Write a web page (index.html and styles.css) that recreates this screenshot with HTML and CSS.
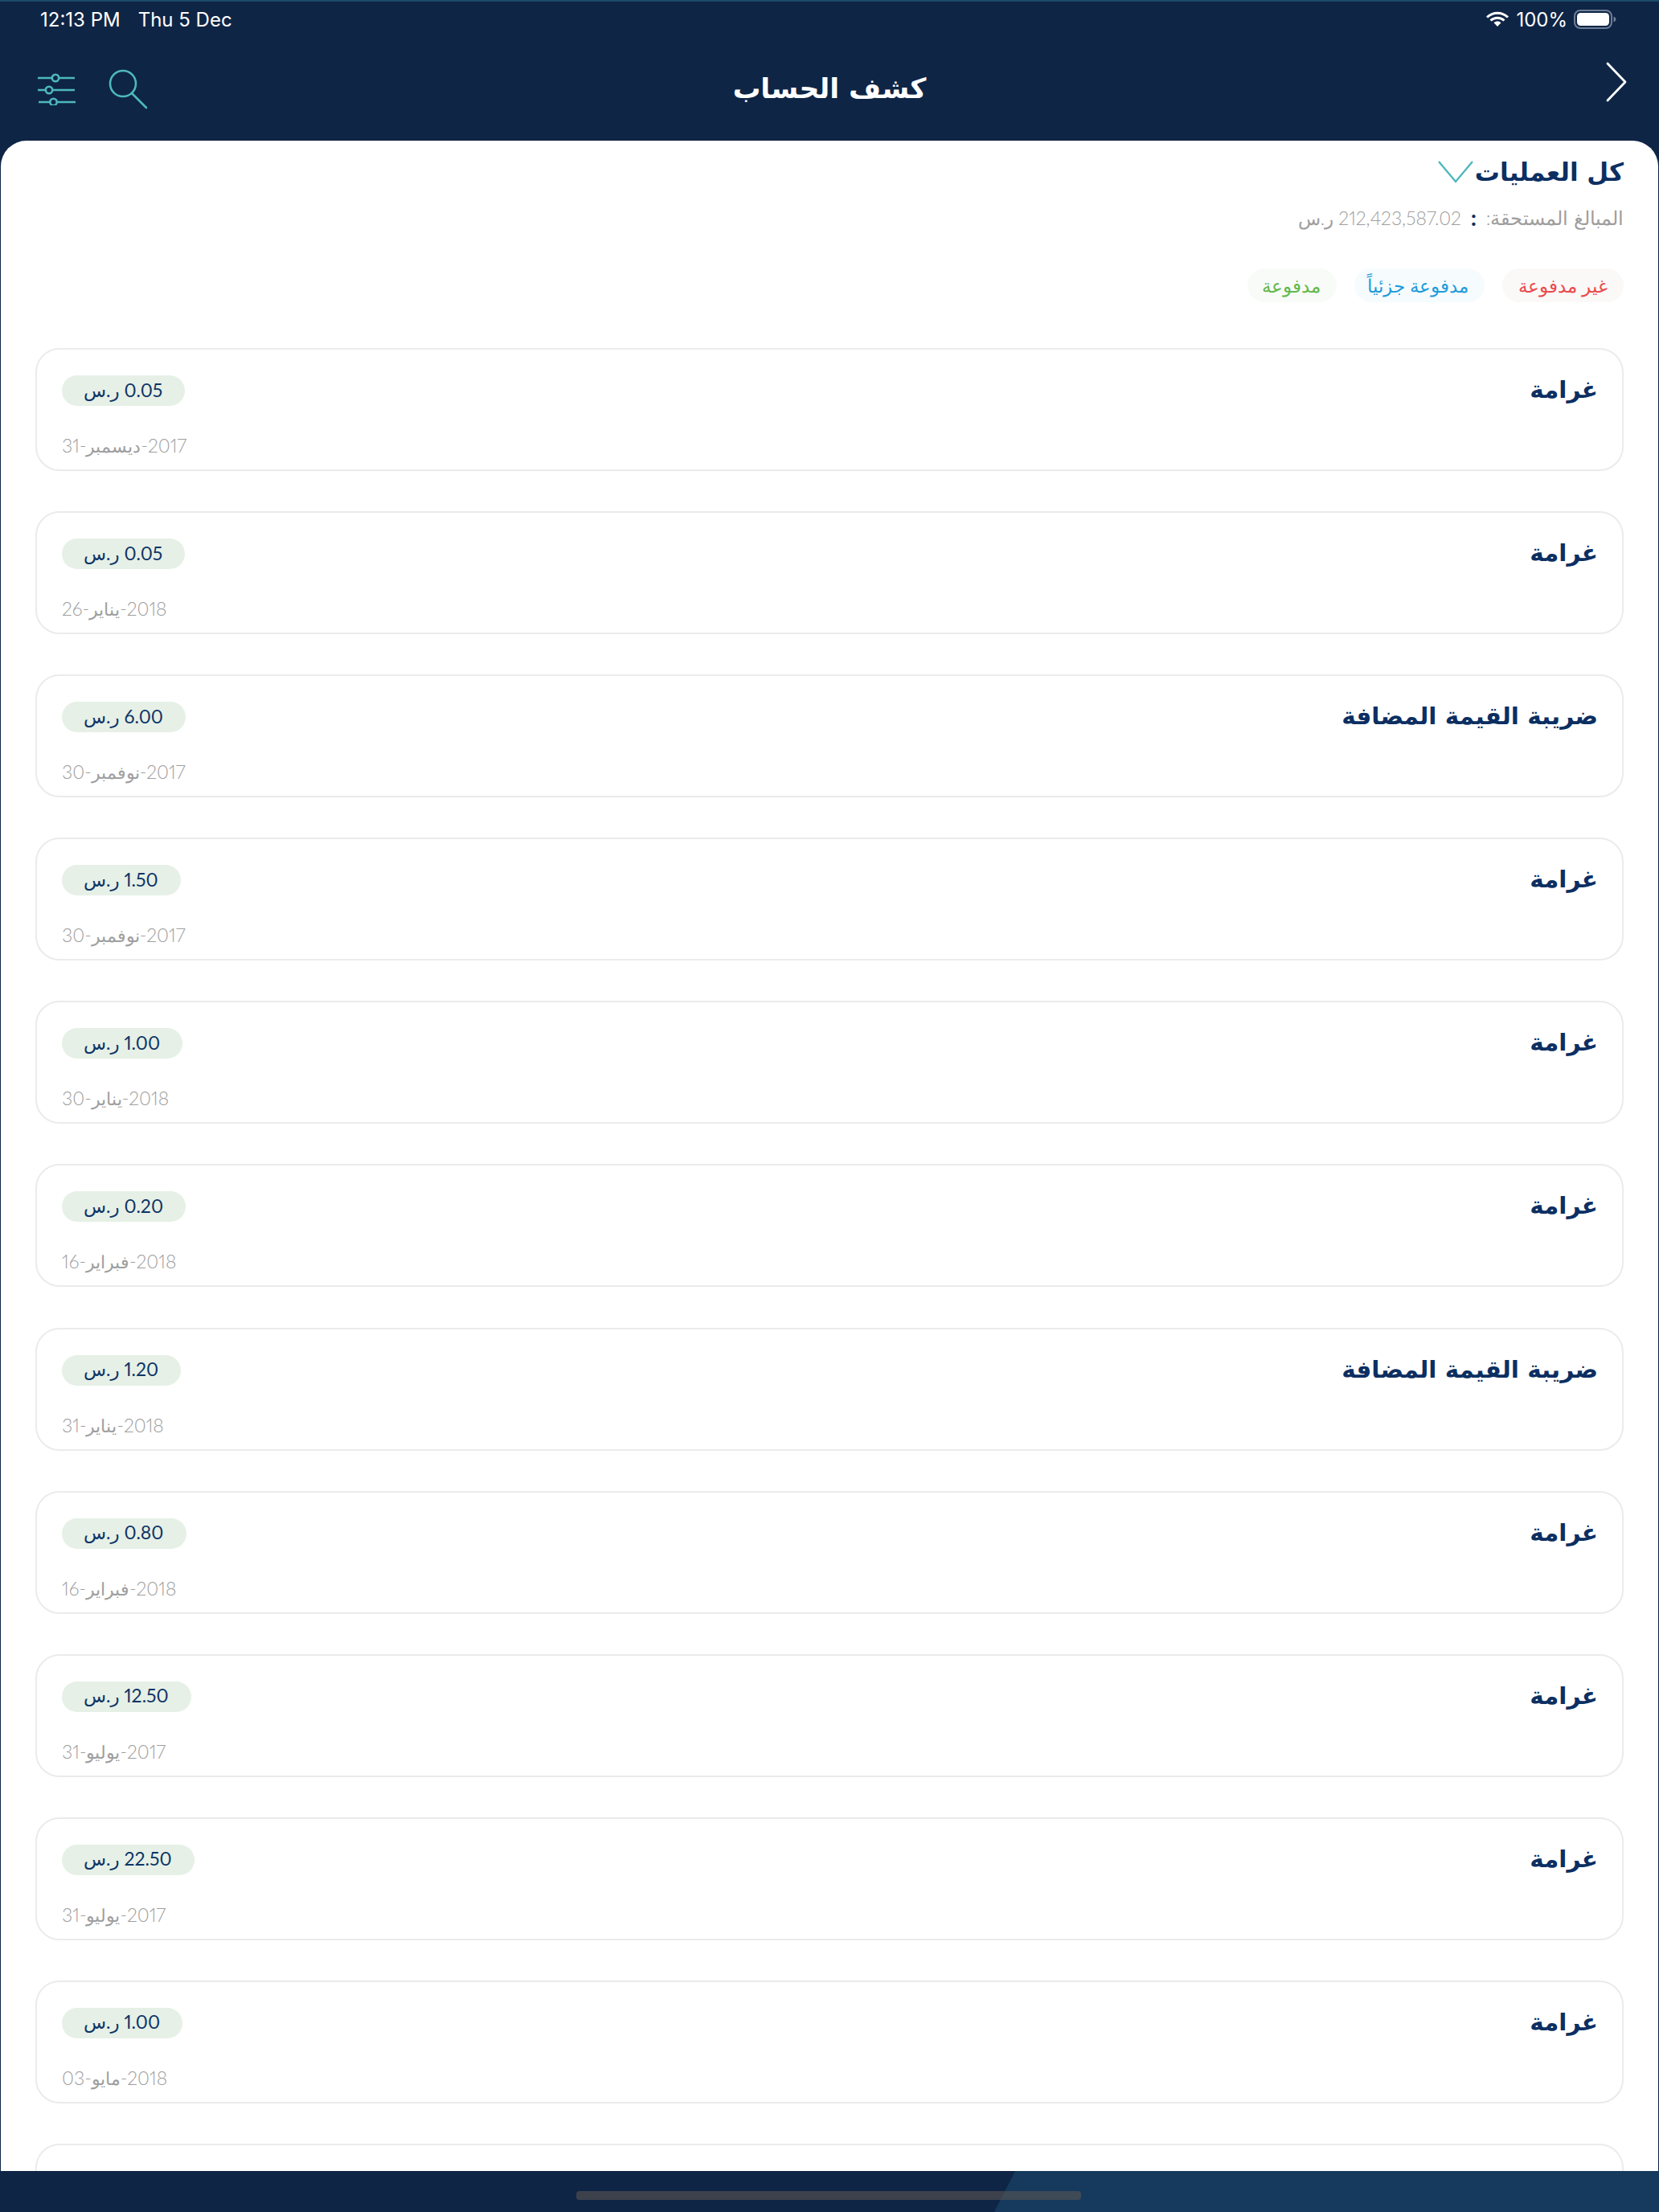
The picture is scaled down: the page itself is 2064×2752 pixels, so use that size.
FILE: index.html
```html
<!DOCTYPE html>
<html lang="ar">
<head>
<meta charset="utf-8">
<title>كشف الحساب</title>
<link rel="stylesheet" href="styles.css">
</head>
<body>
<header class="top">
  <div class="status">
    <div class="status-left"><span>12:13 PM</span><span>Thu 5 Dec</span></div>
    <div class="status-right">
      <svg class="wifi" width="30" height="20" viewBox="0 0 30 20"><path d="M2 7.5C9.5 .5 20.5 .5 28 7.5M6.5 11.5C11.5 7 18.5 7 23.5 11.5" fill="none" stroke="#fff" stroke-width="3"/><path d="M10.5 14.2C13.2 11.9 16.8 11.9 19.5 14.2L15 19Z" fill="#fff"/></svg>
      <span>100%</span>
      <svg class="battery" width="54" height="24" viewBox="0 0 54 24"><rect x="1" y="1" width="46" height="22" rx="7" fill="none" stroke="#6e7d96" stroke-width="2"/><rect x="4" y="4" width="40" height="16" rx="4.5" fill="#fff"/><path d="M49.500 8.500C51.500 9.300 52.500 10.500 52.500 12C52.500 13.500 51.500 14.700 49.500 15.500Z" fill="#6e7d96"/></svg>
    </div>
  </div>
  <div class="nav">
    <div class="nav-icons">
      <svg width="50" height="40" viewBox="0 0 50 40" fill="none" stroke="#4db8bd" stroke-width="2.6"><path d="M1 6H19M27 6H47M1 21H11M19 21H47M2 36H16M25 36H48"/><circle cx="23" cy="6" r="4.2"/><circle cx="15" cy="21" r="4.2"/><circle cx="20.500" cy="36" r="4.200"/></svg>
      <svg width="50" height="50" viewBox="0 0 50 50" fill="none" stroke="#4db8bd" stroke-width="2.6"><circle cx="18" cy="18" r="16"/><path d="M29 30L47 48" stroke-linecap="round"/></svg>
    </div>
    <h1 class="nav-title">كشف الحساب</h1>
    <svg class="nav-back" width="28" height="50" viewBox="0 0 28 50" fill="none" stroke="#fff" stroke-width="2.8" stroke-linecap="round" stroke-linejoin="round"><path d="M3 2L25 25L3 48"/></svg>
  </div>
</header>

<main class="sheet" dir="rtl">
  <div class="summary">
    <div class="summary-title"><span>كل العمليات</span><svg width="44" height="30" viewBox="0 0 44 30" fill="none" stroke="#4db8bd" stroke-width="2.4"><path d="M1 2L22 27L43 2"/></svg></div>
    <div class="summary-due"><span class="due-label">المبالغ المستحقة:</span><b class="colon">:</b><span>212,423,587.02 ر.س</span></div>
    <div class="filters">
      <span class="filter filter-red">غير مدفوعة</span>
      <span class="filter filter-blue">مدفوعة جزئياً</span>
      <span class="filter filter-green">مدفوعة</span>
    </div>
  </div>
  <div class="list">
    <article class="card"><div class="card-row"><h2 class="card-title">غرامة</h2><span class="amount">0.05 ر.س</span></div><div class="date" dir="ltr">31-<bdi>ديسمبر</bdi>-2017</div></article>
    <article class="card"><div class="card-row"><h2 class="card-title">غرامة</h2><span class="amount">0.05 ر.س</span></div><div class="date" dir="ltr">26-<bdi>يناير</bdi>-2018</div></article>
    <article class="card"><div class="card-row"><h2 class="card-title">ضريبة القيمة المضافة</h2><span class="amount">6.00 ر.س</span></div><div class="date" dir="ltr">30-<bdi>نوفمبر</bdi>-2017</div></article>
    <article class="card"><div class="card-row"><h2 class="card-title">غرامة</h2><span class="amount">1.50 ر.س</span></div><div class="date" dir="ltr">30-<bdi>نوفمبر</bdi>-2017</div></article>
    <article class="card"><div class="card-row"><h2 class="card-title">غرامة</h2><span class="amount">1.00 ر.س</span></div><div class="date" dir="ltr">30-<bdi>يناير</bdi>-2018</div></article>
    <article class="card"><div class="card-row"><h2 class="card-title">غرامة</h2><span class="amount">0.20 ر.س</span></div><div class="date" dir="ltr">16-<bdi>فبراير</bdi>-2018</div></article>
    <article class="card"><div class="card-row"><h2 class="card-title">ضريبة القيمة المضافة</h2><span class="amount">1.20 ر.س</span></div><div class="date" dir="ltr">31-<bdi>يناير</bdi>-2018</div></article>
    <article class="card"><div class="card-row"><h2 class="card-title">غرامة</h2><span class="amount">0.80 ر.س</span></div><div class="date" dir="ltr">16-<bdi>فبراير</bdi>-2018</div></article>
    <article class="card"><div class="card-row"><h2 class="card-title">غرامة</h2><span class="amount">12.50 ر.س</span></div><div class="date" dir="ltr">31-<bdi>يوليو</bdi>-2017</div></article>
    <article class="card"><div class="card-row"><h2 class="card-title">غرامة</h2><span class="amount">22.50 ر.س</span></div><div class="date" dir="ltr">31-<bdi>يوليو</bdi>-2017</div></article>
    <article class="card"><div class="card-row"><h2 class="card-title">غرامة</h2><span class="amount">1.00 ر.س</span></div><div class="date" dir="ltr">03-<bdi>مايو</bdi>-2018</div></article>
    <article class="card"></article>
  </div>
</main>

<footer class="bottom"><div class="bottom-shade"></div><div class="home-bar"></div></footer>
</body>
</html>
```

FILE: styles.css
```css
* { box-sizing: border-box; }
html, body { margin: 0; height: 2752px; }
body {
  display: flex;
  flex-direction: column;
  overflow: hidden;
  background: #0f2546;
  font-family: "Lato", "DejaVu Sans", sans-serif;
  font-variant-numeric: proportional-nums;
}
.top { height: 175px; flex: none; border-top: 2px solid #1b4a68; color: #fff; }
.status {
  display: flex;
  justify-content: space-between;
  align-items: center;
  height: 44px;
  padding: 0 52px 0 50px;
  font: 400 24px "Inter", "Liberation Sans", sans-serif;
}
.status-left { display: flex; gap: 22px; }
.status-right { display: flex; align-items: center; gap: 8px; }
.status-right svg { display: block; }
.nav {
  position: relative;
  display: flex;
  align-items: center;
  justify-content: space-between;
  height: 129px;
  padding: 0 39px 0 46px;
}
.nav-icons { display: flex; align-items: center; gap: 39px; }
.nav-icons svg { display: block; }
.nav-back { margin-bottom: 18px; }
.nav-title {
  position: absolute;
  left: 0;
  right: 0;
  top: 36px;
  margin: 0;
  text-align: center;
  font: 700 34.5px/56px "DejaVu Sans", sans-serif;
}
.sheet {
  flex: 1;
  min-height: 0;
  overflow: hidden;
  margin: 0 1px;
  padding: 0 43px;
  background: #fff;
  border-radius: 32px 32px 0 0;
}
.summary { padding-top: 15px; height: 258px; }
.summary-title {
  display: flex;
  align-items: center;
  gap: 2px;
  color: #0c2f62;
  font: 700 31px/48px "DejaVu Sans", sans-serif;
}
.summary-due {
  display: flex;
  align-items: center;
  gap: 12px;
  margin-top: 15px;
  color: #9e9e9e;
  font-size: 23px;
  font-weight: 300;
  line-height: 36px;
}
.due-label { font-size: 24px; }
.colon { color: #0c2f62; font-size: 26px; font-weight: 900; }
.filters { display: flex; gap: 22px; margin-top: 45px; }
.filter {
  display: flex;
  align-items: center;
  height: 42px;
  padding: 0 20px;
  border-radius: 21px;
  font-size: 23px;
  font-weight: 300;
}
.filter-red { color: #e94b4b; background: #fbf8f8; }
.filter-blue { padding-inline-end: 16px; color: #1e9bdc; background: #f6fbfe; }
.filter-green { padding-inline-end: 18px; color: #62b84a; background: #f8fbf8; }
.list { display: flex; flex-direction: column; gap: 50.1px; }
.card {
  flex: none;
  height: 153px;
  padding: 32px 30px 0 31px;
  border: 2px solid #ebebeb;
  border-radius: 30px;
}
.card-row { display: flex; align-items: center; justify-content: space-between; height: 38px; }
.card-title { margin: -2px 0 0; color: #0c2f62; font: 700 29.5px/38px "DejaVu Sans", sans-serif; }
.amount {
  display: flex;
  align-items: center;
  height: 38px;
  padding: 0 28px 3px 27px;
  border-radius: 19px;
  background: #e6f0e6;
  color: #0f3566;
  font-size: 23px;
  font-weight: 400;
}
.date {
  margin-top: 31px;
  text-align: left;
  color: #9e9e9e;
  font-size: 23px;
  font-weight: 300;
  line-height: 36px;
}
.date bdi { font-size: 22px; }
.bottom { position: relative; flex: none; height: 51px; overflow: hidden; background: #0f2546; }
.bottom-shade {
  position: absolute;
  inset: 0;
  background: #153a5e;
  clip-path: polygon(1263px 0, 100% 0, 100% 100%, 1237px 100%);
}
.home-bar {
  position: absolute;
  left: 717px;
  top: 25px;
  width: 628px;
  height: 11px;
  border-radius: 4px;
  background: rgba(90, 85, 80, 0.6);
}
```
